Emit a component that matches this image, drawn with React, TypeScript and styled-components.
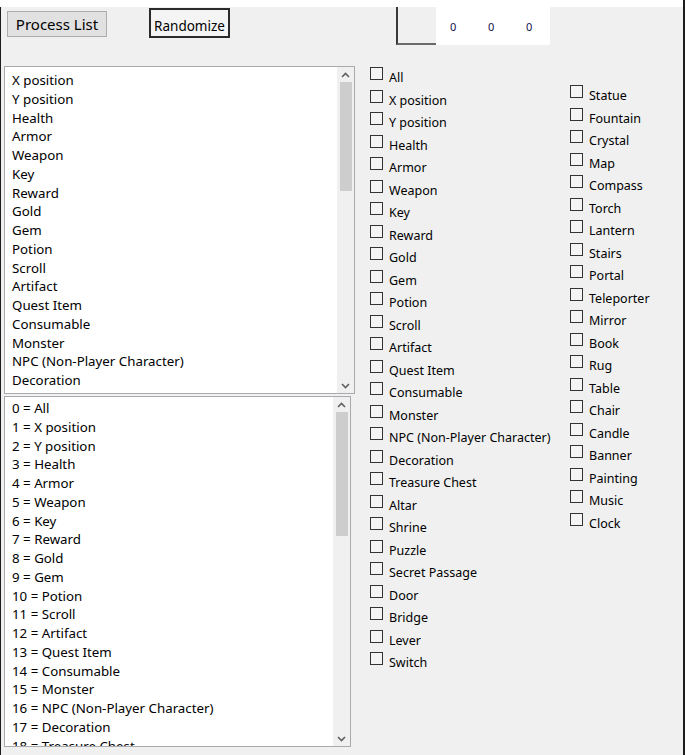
import React from "react";
import styled, { createGlobalStyle } from "styled-components";

const GlobalStyle = createGlobalStyle`
  html, body {
    margin: 0;
    padding: 0;
    background: #ffffff;
  }
  body {
    font-family: "Noto Sans", "Open Sans", sans-serif;
    color: #000;
  }
`;

const Window = styled.div`
  width: 685px;
  height: 755px;
  box-sizing: border-box;
  border-right: 2px solid #1c1c1c;
  display: flex;
  flex-direction: column;
  overflow: hidden;
`;

const TopStrip = styled.div`
  height: 7px;
  background: #ffffff;
  flex-shrink: 0;
`;

const Panel = styled.div`
  flex: 1;
  background: #f0f0f0;
  border-left: 1px solid #1c1c1c;
  display: flex;
  flex-direction: column;
`;

const Toolbar = styled.div`
  height: 59px;
  display: flex;
  align-items: flex-start;
`;

const ProcessButton = styled.button`
  margin: 4px 0 0 6px;
  width: 100px;
  height: 26px;
  background: #e1e1e1;
  border: 1px solid #adadad;
  font-family: inherit;
  font-size: 15px;
  padding: 0;
  color: #000;
`;

const RandomButton = styled.button`
  margin: 1px 0 0 42px;
  width: 81px;
  height: 30px;
  background: #f4f4f4;
  border: 2px solid #2a2a2a;
  font-family: inherit;
  font-size: 13.5px;
  padding: 6px 0 0;
  color: #000;
`;

const Swatch = styled.div`
  margin-left: 166px;
  width: 40px;
  height: 38px;
  box-sizing: border-box;
  background: #f0f0f0;
  border-left: 2px solid #3a3a3a;
  border-bottom: 2px solid #6a6a6a;
`;

const Readout = styled.div`
  width: 114px;
  height: 38px;
  background: #ffffff;
  display: flex;
  align-items: center;
  padding-left: 14px;
  box-sizing: border-box;
  gap: 33px;
`;

const Zero = styled.span`
  font-size: 11px;
  color: #10104a;
  width: 5px;
`;

const Body = styled.div`
  display: flex;
  align-items: flex-start;
`;

const ListColumn = styled.div`
  margin-left: 3px;
  display: flex;
  flex-direction: column;
  gap: 2px;
`;

const ListBox = styled.div<{ $w: number; $h: number }>`
  width: ${(p) => p.$w}px;
  height: ${(p) => p.$h}px;
  box-sizing: border-box;
  border: 1px solid #a9a9b0;
  background: #ffffff;
  display: flex;
`;

const ListItems = styled.div<{ $top: number }>`
  flex: 1;
  overflow: hidden;
  padding: ${(p) => p.$top}px 0 0 7px;
`;

const ListItem = styled.div`
  height: 18.75px;
  line-height: 18.75px;
  font-size: 13.3px;
  white-space: nowrap;
`;

const ScrollBar = styled.div`
  width: 17px;
  background: #f0f0f0;
  display: flex;
  flex-direction: column;
  align-items: center;
  border-left: 1px solid #ffffff;
`;

const Arrow = styled.div`
  height: 15px;
  width: 17px;
  display: flex;
  align-items: center;
  justify-content: center;
`;

const Track = styled.div`
  flex: 1;
  width: 100%;
  display: flex;
  flex-direction: column;
  align-items: center;
`;

const Thumb = styled.div<{ $h: number }>`
  width: 12px;
  height: ${(p) => p.$h}px;
  background: #cdcdcd;
`;

const CheckArea = styled.div`
  display: flex;
  margin-left: 15px;
`;

const CheckColumn = styled.div<{ $top: number; $w: number }>`
  padding-top: ${(p) => p.$top}px;
  width: ${(p) => p.$w}px;
  display: flex;
  flex-direction: column;
`;

const CheckRow = styled.label`
  height: 22.5px;
  display: flex;
  align-items: flex-start;
`;

const Box = styled.span`
  width: 13px;
  height: 13px;
  box-sizing: border-box;
  border: 1px solid #333333;
  background: #f4f4f4;
  flex-shrink: 0;
`;

const CheckText = styled.span`
  margin-left: 6px;
  font-size: 12.5px;
  line-height: 16px;
  padding-top: 3px;
  white-space: nowrap;
`;

const items = [
  "All",
  "X position",
  "Y position",
  "Health",
  "Armor",
  "Weapon",
  "Key",
  "Reward",
  "Gold",
  "Gem",
  "Potion",
  "Scroll",
  "Artifact",
  "Quest Item",
  "Consumable",
  "Monster",
  "NPC (Non-Player Character)",
  "Decoration",
  "Treasure Chest",
  "Altar",
  "Shrine",
  "Puzzle",
  "Secret Passage",
  "Door",
  "Bridge",
  "Lever",
  "Switch",
];

const moreItems = [
  "Statue",
  "Fountain",
  "Crystal",
  "Map",
  "Compass",
  "Torch",
  "Lantern",
  "Stairs",
  "Portal",
  "Teleporter",
  "Mirror",
  "Book",
  "Rug",
  "Table",
  "Chair",
  "Candle",
  "Banner",
  "Painting",
  "Music",
  "Clock",
];

function Chevron({ up }: { up?: boolean }) {
  return (
    <svg width="9" height="6" viewBox="0 0 9 6">
      <path
        d={up ? "M1 5 L4.5 1.5 L8 5" : "M1 1 L4.5 4.5 L8 1"}
        fill="none"
        stroke="#606060"
        strokeWidth="1.6"
      />
    </svg>
  );
}

function Scroller({ thumb }: { thumb: number }) {
  return (
    <ScrollBar>
      <Arrow>
        <Chevron up />
      </Arrow>
      <Track>
        <Thumb $h={thumb} />
      </Track>
      <Arrow>
        <Chevron />
      </Arrow>
    </ScrollBar>
  );
}

export default function App() {
  return (
    <>
      <GlobalStyle />
      <Window>
        <TopStrip />
        <Panel>
          <Toolbar>
            <ProcessButton>Process List</ProcessButton>
            <RandomButton>Randomize</RandomButton>
            <Swatch />
            <Readout>
              <Zero>0</Zero>
              <Zero>0</Zero>
              <Zero>0</Zero>
            </Readout>
          </Toolbar>
          <Body>
            <ListColumn>
              <ListBox $w={351} $h={328}>
                <ListItems $top={4}>
                  {items.slice(1, 18).map((it) => (
                    <ListItem key={it}>{it}</ListItem>
                  ))}
                </ListItems>
                <Scroller thumb={109} />
              </ListBox>
              <ListBox $w={347} $h={351}>
                <ListItems $top={2}>
                  {items.slice(0, 19).map((it, i) => (
                    <ListItem key={it}>{`${i} = ${it}`}</ListItem>
                  ))}
                </ListItems>
                <Scroller thumb={124} />
              </ListBox>
            </ListColumn>
            <CheckArea>
              <CheckColumn $top={1} $w={200}>
                {items.map((it) => (
                  <CheckRow key={it}>
                    <Box />
                    <CheckText>{it}</CheckText>
                  </CheckRow>
                ))}
              </CheckColumn>
              <CheckColumn $top={19} $w={100}>
                {moreItems.map((it) => (
                  <CheckRow key={it}>
                    <Box />
                    <CheckText>{it}</CheckText>
                  </CheckRow>
                ))}
              </CheckColumn>
            </CheckArea>
          </Body>
        </Panel>
      </Window>
    </>
  );
}
